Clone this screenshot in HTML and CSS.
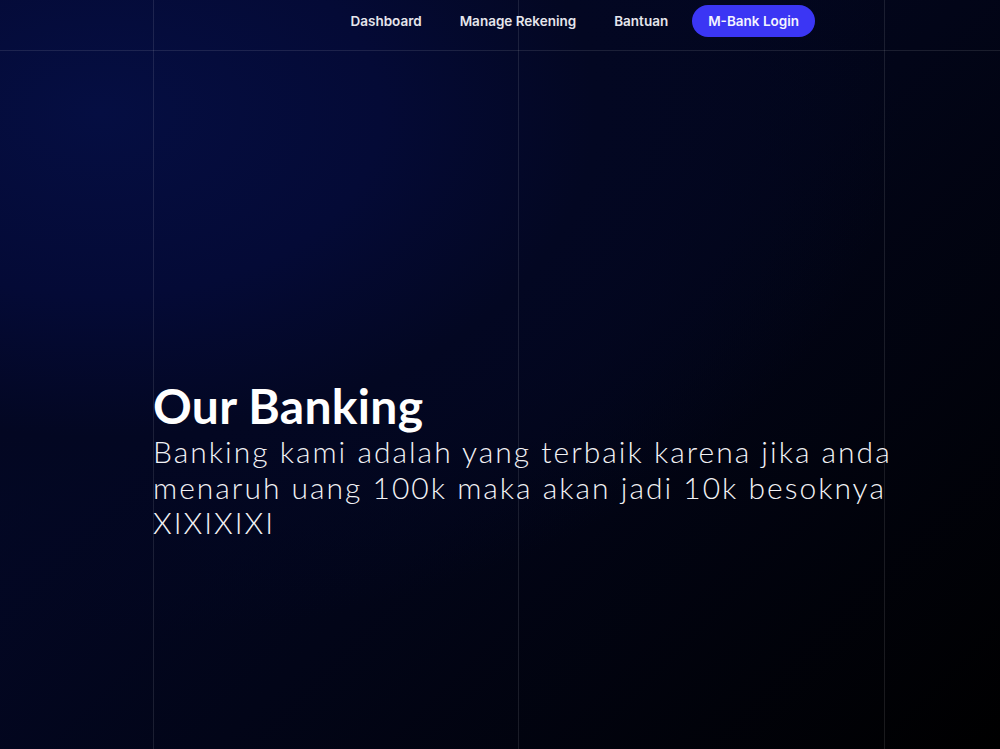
FILE: index.html
```html
<!DOCTYPE html>
<html>
<head>
  <link rel="stylesheet" href="styles.css">
</head>
<body>
  <div class="page">
    <!-- Decorative grid lines -->
    <div class="grid-lines">
      <div class="grid-col"></div>
      <div class="grid-col grid-col-wide"></div>
      <div class="grid-col"></div>
    </div>

    <header class="navbar">
      <nav class="nav-links">
        <a href="#" class="nav-link">Dashboard</a>
        <a href="#" class="nav-link">Manage Rekening</a>
        <a href="#" class="nav-link">Bantuan</a>
        <a href="#" class="nav-btn">M-Bank Login</a>
      </nav>
    </header>

    <section class="hero">
      <h1 class="hero-title">Our Banking</h1>
      <p class="hero-text">Banking kami adalah yang terbaik karena jika anda menaruh uang 100k maka akan jadi 10k besoknya XIXIXIXI</p>
    </section>
  </div>
</body>
</html>
```

FILE: styles.css
```css
* {
  box-sizing: border-box;
}

body {
  margin: 0;
  font-family: "Lato", "Noto Sans", sans-serif;
  color: #fff;
  background: #000;
}

.page {
  position: relative;
  min-height: 749px;
  height: 749px;
  overflow: hidden;
  background:
    radial-gradient(ellipse 80% 70% at 10% 15%, #050e42 0%, #040a36 35%, #030722 62%, rgba(0,0,0,0) 100%),
    linear-gradient(135deg, #040a34 0%, #020518 55%, #000 100%);
}

.grid-lines {
  position: absolute;
  top: 0;
  bottom: 0;
  left: 153px;
  display: flex;
  pointer-events: none;
}

.grid-col {
  width: 365px;
  border-left: 1px solid rgba(255, 255, 255, 0.1);
}

.grid-col-wide {
  width: 366px;
}

.navbar {
  position: relative;
  height: 51px;
  border-bottom: 1px solid rgba(255, 255, 255, 0.1);
  display: flex;
  justify-content: flex-end;
  align-items: flex-start;
  padding-right: 185px;
}

.nav-links {
  display: flex;
  align-items: center;
  height: 42px;
}

.nav-link {
  font-family: "Inter", sans-serif;
  font-size: 13.5px;
  font-weight: 600;
  color: #e6e6ec;
  text-decoration: none;
  padding: 0 19px;
}

.nav-btn {
  font-family: "Inter", sans-serif;
  font-size: 13.5px;
  font-weight: 600;
  color: #f4f4ff;
  text-decoration: none;
  background: #3b36f4;
  border-radius: 999px;
  height: 32px;
  display: flex;
  align-items: center;
  padding: 0 16px;
  margin-left: 5px;
}

.hero {
  position: relative;
  padding: 327px 0 0 153px;
}

.hero-title {
  margin: 0;
  font-size: 48px;
  font-weight: 700;
  line-height: 56px;
  letter-spacing: 0.3px;
}

.hero-text {
  margin: 0;
  max-width: 790px;
  font-size: 30px;
  font-weight: 300;
  line-height: 35.5px;
  letter-spacing: 2px;
  color: #f2f2f5;
}
```
